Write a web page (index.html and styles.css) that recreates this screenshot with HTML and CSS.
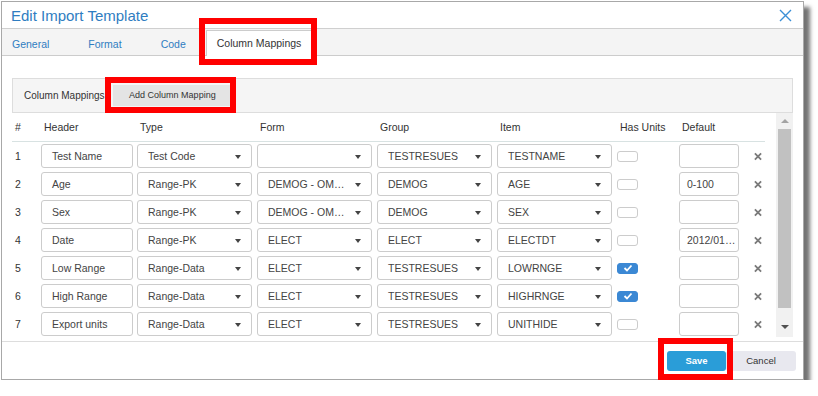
FILE: index.html
```html
<!DOCTYPE html>
<html>
  <head>
    <title>Edit Import Template</title>
    <meta charset="utf-8">
    <link rel="stylesheet" href="styles.css">
  </head>
  <body>
    <div class="dialog">
      <div class="title-bar">
        <span class="title">Edit Import Template</span>
        <svg class="close" width="13" height="13" viewBox="0 0 13 13"><path d="M1 1 L12 12 M12 1 L1 12" stroke="#3b8fd6" stroke-width="1.4" fill="none"/></svg>
      </div>
      <div class="tab-bar">
        <span class="tab">General</span>
        <span class="tab">Format</span>
        <span class="tab">Code</span>
        <span class="tab active">Column Mappings</span>
      </div>

      <div class="dialog-body">
        <div class="panel">
          <span class="panel-label">Column Mappings:</span>
          <span class="add-btn">Add Column Mapping</span>
        </div>

        <div class="list-area">
          <div class="map-table">
            <div class="map-head">
              <span>#</span>
              <span>Header</span>
              <span>Type</span>
              <span>Form</span>
              <span>Group</span>
              <span>Item</span>
              <span>Has Units</span>
              <span>Default</span>
              <span></span>
            </div>
            <div class="map-rows">
              <div class="map-row">
                <span class="num">1</span>
                <span class="field hdr">Test Name</span>
                <span class="field sel">Test Code</span>
                <span class="field sel"></span>
                <span class="field sel">TESTRESUES</span>
                <span class="field sel">TESTNAME</span>
                <span class="check"></span>
                <span class="field dflt"></span>
                <span class="remove"><svg width="9" height="9" viewBox="0 0 9 9"><path d="M1 1 L8 8 M8 1 L1 8" stroke="#7a7a7a" stroke-width="2"/></svg></span>
              </div>
              <div class="map-row">
                <span class="num">2</span>
                <span class="field hdr">Age</span>
                <span class="field sel">Range-PK</span>
                <span class="field sel">DEMOG - OM…</span>
                <span class="field sel">DEMOG</span>
                <span class="field sel">AGE</span>
                <span class="check"></span>
                <span class="field dflt">0-100</span>
                <span class="remove"><svg width="9" height="9" viewBox="0 0 9 9"><path d="M1 1 L8 8 M8 1 L1 8" stroke="#7a7a7a" stroke-width="2"/></svg></span>
              </div>
              <div class="map-row">
                <span class="num">3</span>
                <span class="field hdr">Sex</span>
                <span class="field sel">Range-PK</span>
                <span class="field sel">DEMOG - OM…</span>
                <span class="field sel">DEMOG</span>
                <span class="field sel">SEX</span>
                <span class="check"></span>
                <span class="field dflt"></span>
                <span class="remove"><svg width="9" height="9" viewBox="0 0 9 9"><path d="M1 1 L8 8 M8 1 L1 8" stroke="#7a7a7a" stroke-width="2"/></svg></span>
              </div>
              <div class="map-row">
                <span class="num">4</span>
                <span class="field hdr">Date</span>
                <span class="field sel">Range-PK</span>
                <span class="field sel">ELECT</span>
                <span class="field sel">ELECT</span>
                <span class="field sel">ELECTDT</span>
                <span class="check"></span>
                <span class="field dflt">2012/01…</span>
                <span class="remove"><svg width="9" height="9" viewBox="0 0 9 9"><path d="M1 1 L8 8 M8 1 L1 8" stroke="#7a7a7a" stroke-width="2"/></svg></span>
              </div>
              <div class="map-row">
                <span class="num">5</span>
                <span class="field hdr">Low Range</span>
                <span class="field sel">Range-Data</span>
                <span class="field sel">ELECT</span>
                <span class="field sel">TESTRESUES</span>
                <span class="field sel">LOWRNGE</span>
                <span class="check on"><svg width="10" height="8" viewBox="0 0 10 8"><path d="M1.5 4 L4 6.5 L8.5 1.5" stroke="#fff" stroke-width="1.8" fill="none"/></svg></span>
                <span class="field dflt"></span>
                <span class="remove"><svg width="9" height="9" viewBox="0 0 9 9"><path d="M1 1 L8 8 M8 1 L1 8" stroke="#7a7a7a" stroke-width="2"/></svg></span>
              </div>
              <div class="map-row">
                <span class="num">6</span>
                <span class="field hdr">High Range</span>
                <span class="field sel">Range-Data</span>
                <span class="field sel">ELECT</span>
                <span class="field sel">TESTRESUES</span>
                <span class="field sel">HIGHRNGE</span>
                <span class="check on"><svg width="10" height="8" viewBox="0 0 10 8"><path d="M1.5 4 L4 6.5 L8.5 1.5" stroke="#fff" stroke-width="1.8" fill="none"/></svg></span>
                <span class="field dflt"></span>
                <span class="remove"><svg width="9" height="9" viewBox="0 0 9 9"><path d="M1 1 L8 8 M8 1 L1 8" stroke="#7a7a7a" stroke-width="2"/></svg></span>
              </div>
              <div class="map-row">
                <span class="num">7</span>
                <span class="field hdr">Export units</span>
                <span class="field sel">Range-Data</span>
                <span class="field sel">ELECT</span>
                <span class="field sel">TESTRESUES</span>
                <span class="field sel">UNITHIDE</span>
                <span class="check"></span>
                <span class="field dflt"></span>
                <span class="remove"><svg width="9" height="9" viewBox="0 0 9 9"><path d="M1 1 L8 8 M8 1 L1 8" stroke="#7a7a7a" stroke-width="2"/></svg></span>
              </div>
            </div>
          </div>

          <div class="scrollbar">
            <span class="arrow-up"></span>
            <span class="thumb"></span>
            <span class="arrow-down"></span>
          </div>
        </div>
      </div>

      <div class="footer">
        <span class="btn save">Save</span>
        <span class="btn cancel">Cancel</span>
      </div>
    </div>

    <!-- red annotation boxes -->
    <div class="mark mark-tab"></div>
    <div class="mark mark-add"></div>
    <div class="mark mark-save"></div>
  </body>
</html>
```

FILE: styles.css
```css
body {
  margin: 0px;
  background-color: #ffffff;
  font-family: "Liberation Sans", Arial, sans-serif;
  color: #333333;
}

.dialog {
  margin: 1px 0 0 1px;
  width: 801px;
  border: 1px solid #a8a8a8;
  background-color: #ffffff;
  box-shadow: 6px 6px 4px rgba(0, 0, 0, 0.55);
}

.title-bar {
  height: 26px;
  border-bottom: 1px solid #cfcfcf;
  display: flex;
  align-items: center;
  justify-content: space-between;
  padding: 0 11px 0 9px;
}

.title {
  font-size: 15px;
  color: #2f7dc1;
}

.close {
  display: block;
}

.tab-bar {
  height: 26px;
  background-color: #f4f4f4;
  border-bottom: 1px solid #cccccc;
  display: flex;
  align-items: flex-end;
  padding-left: 0px;
}

.tab {
  font-size: 10.5px;
  color: #2f7dc1;
  padding: 0 10px;
  height: 24px;
  line-height: 26px;
}

.tab + .tab {
  margin-left: 19px;
}

.tab.active {
  margin-left: 10px;
  padding: 0 10px 0 10px;
  height: 25px;
  line-height: 24px;
  margin-bottom: -1px;
  background-color: #ffffff;
  color: #333333;
  border: 1px solid #cccccc;
  border-bottom: none;
}

.dialog-body {
  height: 285px;
  padding: 22px 10px 0 10px;
  box-sizing: border-box;
}

.panel {
  height: 35px;
  box-sizing: border-box;
  border: 1px solid #dddddd;
  background-color: #f5f5f5;
  display: flex;
  align-items: center;
  padding-left: 11px;
  gap: 6px;
}

.panel-label {
  font-size: 10px;
}

.add-btn {
  width: 118px;
  height: 21px;
  line-height: 21px;
  text-align: center;
  background-color: #e4e4e4;
  font-size: 9px;
  color: #333333;
}

.list-area {
  height: 224px;
  display: flex;
  justify-content: space-between;
  overflow: hidden;
}

.map-table {
  width: 753px;
}

.map-head,
.map-row {
  display: grid;
  grid-template-columns: 29px 96px 120px 120px 120px 120px 62px 75px 11px;
  align-items: center;
}

.map-head {
  height: 28px;
  border-bottom: 1px solid #d8e2e2;
  font-size: 10.5px;
  color: #333333;
}

.map-head span {
  padding-left: 3px;
}

.map-rows {
  padding-top: 2px;
  display: flex;
  flex-direction: column;
  gap: 4px;
}

.map-row {
  height: 24px;
  font-size: 10.5px;
}

.num {
  padding-left: 3px;
  color: #333333;
}

.field {
  position: relative;
  height: 24px;
  box-sizing: border-box;
  border: 1px solid #cccccc;
  border-radius: 3px;
  padding-left: 10px;
  line-height: 22px;
  color: #444444;
  white-space: nowrap;
  overflow: hidden;
}

.hdr {
  width: 92px;
}

.sel {
  width: 115px;
}

.sel::after {
  content: "";
  position: absolute;
  right: 10px;
  top: 10px;
  border-left: 3px solid transparent;
  border-right: 3px solid transparent;
  border-top: 4px solid #444444;
}

.dflt {
  width: 60px;
  padding-left: 7px;
}

.check {
  width: 21px;
  height: 11px;
  box-sizing: border-box;
  border: 1px solid #cccccc;
  border-radius: 3px;
  display: flex;
  align-items: center;
  justify-content: center;
}

.check.on {
  background-color: #3b88d4;
  border-color: #3b88d4;
}

.check svg,
.remove svg {
  display: block;
}

.remove {
  display: flex;
  justify-content: flex-end;
  padding-right: 3px;
}

.scrollbar {
  width: 17px;
  background-color: #f1f1f1;
  display: flex;
  flex-direction: column;
  align-items: center;
}

.arrow-up {
  margin-top: 6px;
  border-left: 4px solid transparent;
  border-right: 4px solid transparent;
  border-bottom: 4px solid #a3a3a3;
}

.thumb {
  margin-top: 6px;
  width: 13px;
  height: 179px;
  background-color: #c1c1c1;
}

.arrow-down {
  margin-top: 17px;
  border-left: 4px solid transparent;
  border-right: 4px solid transparent;
  border-top: 4px solid #505050;
}

.footer {
  height: 37px;
  border-top: 1px solid #dddddd;
  display: flex;
  justify-content: flex-end;
  align-items: center;
  padding-right: 7px;
}

.btn {
  height: 20px;
  line-height: 20px;
  text-align: center;
  border-radius: 3px;
  font-size: 9.5px;
}

.save {
  width: 59px;
  background-color: #2a9dd8;
  color: #ffffff;
  font-weight: bold;
}

.cancel {
  width: 70px;
  background-color: #e8e8ef;
  color: #333333;
}

.mark {
  position: absolute;
  border: 6px solid #ff0000;
  box-sizing: border-box;
}

.mark-tab {
  left: 199px;
  top: 18px;
  width: 118px;
  height: 47px;
}

.mark-add {
  left: 105px;
  top: 77px;
  width: 131px;
  height: 36px;
}

.mark-save {
  left: 658px;
  top: 338px;
  width: 75px;
  height: 42px;
}
```
